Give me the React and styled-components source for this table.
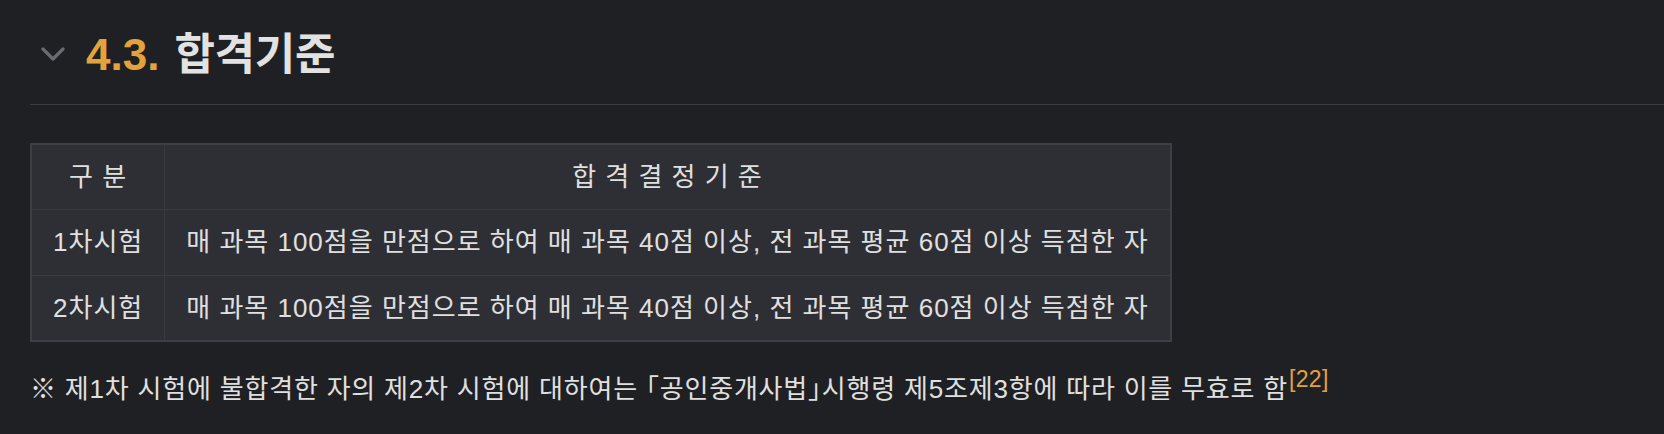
import React from "react";
import styled, { createGlobalStyle } from "styled-components";

const Global = createGlobalStyle`
  html, body {
    margin: 0;
    padding: 0;
    background: #1f2023;
  }
  body {
    font-family: "Liberation Sans", "Noto Sans CJK KR", sans-serif;
    color: #e0e0e0;
  }
`;

const Page = styled.div`
  padding: 0 0 0 30px;
  width: 1664px;
  box-sizing: border-box;
`;

const Heading = styled.h2`
  margin: 0;
  display: flex;
  align-items: center;
  padding: 27px 0 21px 11px;
  border-bottom: 1px solid #3c3d42;
  font-size: 44px;
  line-height: 56px;
  font-weight: 700;
`;

const Toggle = styled.span`
  display: inline-flex;
  width: 24px;
  height: 16px;
  margin-right: 21px;
  color: #6a6b70;
`;

const Num = styled.span`
  color: #e4a23c;
  margin-right: 15px;
`;

const Title = styled.span`
  color: #e2e2e2;
  letter-spacing: -0.3px;
`;

const Content = styled.div`
  padding-top: 38px;
`;

const Table = styled.table`
  border-collapse: collapse;
  background: #2e2f34;
  border: 2px solid #3e3f44;
  font-size: 26px;
  line-height: 32.3px;
  letter-spacing: 1px;
`;

const Cell = styled.td`
  border: 1px solid #393a3f;
  padding: 16px 21px;
  text-align: ${(p) => (p.$center ? "center" : "left")};
  color: #e0e0e0;
  white-space: nowrap;
`;

const Note = styled.p`
  margin: 28px 0 0;
  font-size: 26px;
  line-height: 39px;
  letter-spacing: 0.8px;
  color: #e0e0e0;
`;

const Law = styled.span`
  font-feature-settings: "halt";
`;

const Ref = styled.sup`
  color: #e4a23c;
  font-size: 23px;
  line-height: 0;
  vertical-align: 11px;
  letter-spacing: 0.3px;
  margin-left: 1px;
`;

const Chevron = () => (
  <svg width="24" height="16" viewBox="0 0 24 16" fill="none">
    <path d="M2 2 L12 12 L22 2" stroke="currentColor" strokeWidth="3.2" strokeLinecap="round" strokeLinejoin="round" />
  </svg>
);

const rows = [
  ["1차시험", "매 과목 100점을 만점으로 하여 매 과목 40점 이상, 전 과목 평균 60점 이상 득점한 자"],
  ["2차시험", "매 과목 100점을 만점으로 하여 매 과목 40점 이상, 전 과목 평균 60점 이상 득점한 자"],
];

export default function App() {
  return (
    <Page>
      <Global />
      <Heading>
        <Toggle>
          <Chevron />
        </Toggle>
        <Num>4.3.</Num>
        <Title>합격기준</Title>
      </Heading>
      <Content>
        <Table>
          <tbody>
            <tr>
              <Cell $center>구 분</Cell>
              <Cell $center>합 격 결 정 기 준</Cell>
            </tr>
            {rows.map(([a, b]) => (
              <tr key={a}>
                <Cell $center>{a}</Cell>
                <Cell>{b}</Cell>
              </tr>
            ))}
          </tbody>
        </Table>
        <Note>
          ※ 제1차 시험에 불합격한 자의 제2차 시험에 대하여는 <Law>「공인중개사법」</Law>시행령 제5조제3항에 따라 이를 무효로 함
          <Ref>[22]</Ref>
        </Note>
      </Content>
    </Page>
  );
}
